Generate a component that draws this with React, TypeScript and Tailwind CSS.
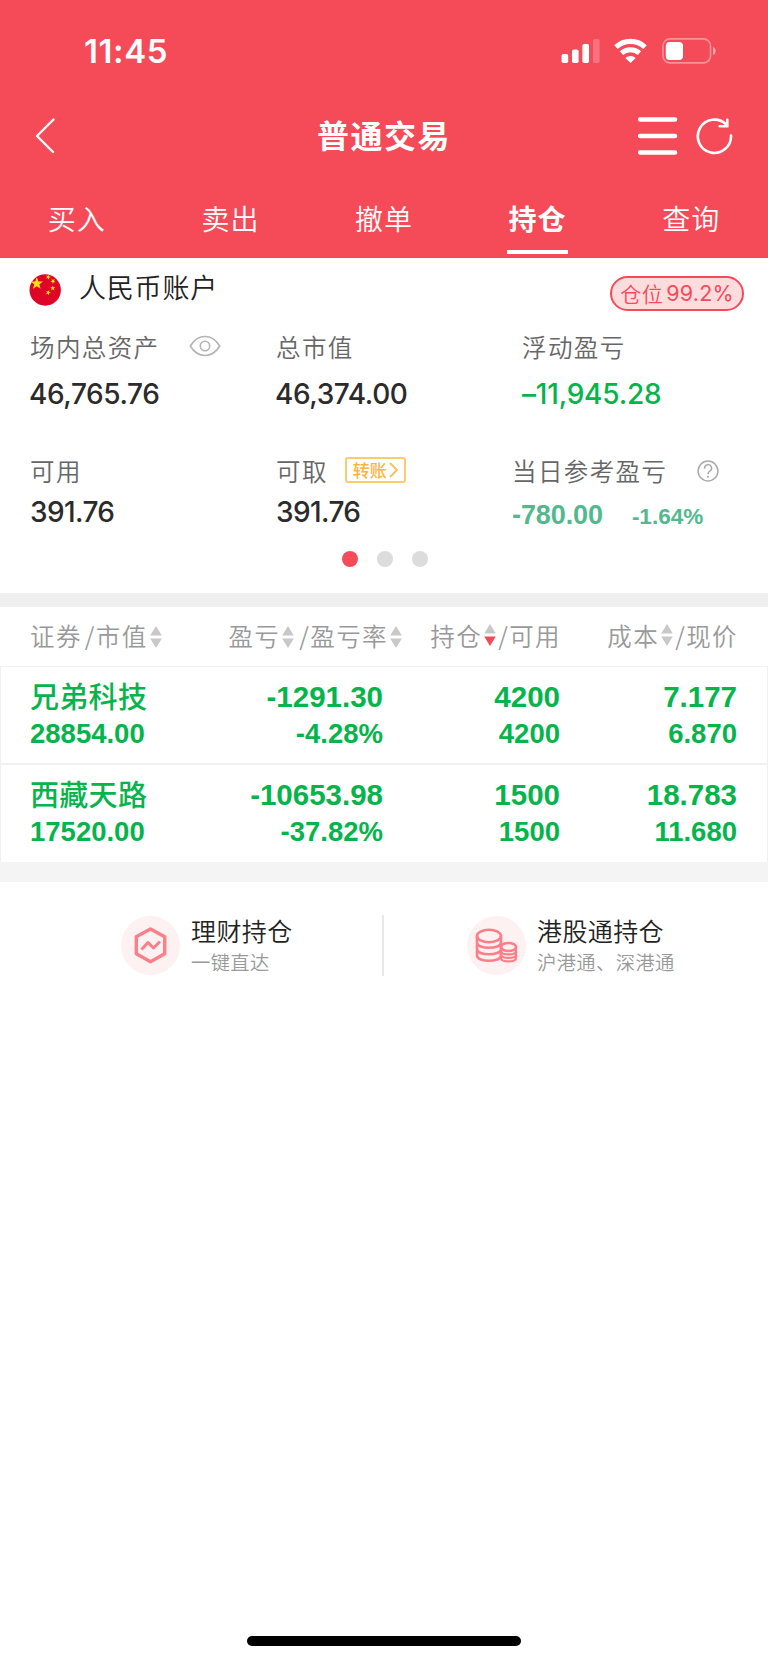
const tabs = ["买入", "卖出", "撤单", "持仓", "查询"];

const holdings = [
  {
    name: "兄弟科技",
    value: "28854.00",
    profit: "-1291.30",
    rate: "-4.28%",
    amount: "4200",
    usable: "4200",
    cost: "7.177",
    price: "6.870",
  },
  {
    name: "西藏天路",
    value: "17520.00",
    profit: "-10653.98",
    rate: "-37.82%",
    amount: "1500",
    usable: "1500",
    cost: "18.783",
    price: "11.680",
  },
];

const cjk = "font-['Noto_Sans_CJK_SC',sans-serif]";
const inter = "font-['Inter','Noto_Sans_CJK_SC',sans-serif]";
const helv = "font-['Liberation_Sans','Noto_Sans_CJK_SC',sans-serif]";

const label = "text-[24.5px] leading-9 tracking-[1.4px] font-[350] text-[#666]";
const amountText = `${inter} text-[28px] leading-9 font-[450] whitespace-nowrap`;

function Sort({ active = false }: { active?: boolean }) {
  return (
    <svg width="12" height="22" viewBox="0 0 12 22" className="shrink-0">
      <path d="M6 0L11.8 9.5H0.2Z" fill="#c8c8c8" />
      <path d="M6 22L11.8 12.5H0.2Z" fill={active ? "#f54b58" : "#c8c8c8"} />
    </svg>
  );
}

function StatusBar() {
  return (
    <div className="h-[103px] flex items-start justify-between pl-[84px] pr-[51px] pt-[38px] text-white">
      <span className={`${inter} text-[33px] leading-[26px] font-semibold tracking-[0.6px]`}>11:45</span>
      <div className="flex items-center">
        <svg width="39" height="26" viewBox="0 0 39 26" fill="#fff">
          <rect x="0.6" y="16" width="6.6" height="9" rx="1.8" />
          <rect x="11" y="11.5" width="6.6" height="13.5" rx="1.8" />
          <rect x="21.4" y="6" width="6.6" height="19" rx="1.8" />
          <rect x="32" y="1" width="6.6" height="24" rx="1.8" opacity="0.22" />
        </svg>
        <svg width="33" height="26" viewBox="0 0 33 26" className="ml-[14px]" fill="none" stroke="#fff">
          <path d="M2 9.2A21.2 21.2 0 0 1 31 9.2" strokeWidth="5.2" />
          <path d="M7.5 15.2A13.2 13.2 0 0 1 25.5 15.2" strokeWidth="5" />
          <path d="M16.5 25L11.3 20A7.5 7.5 0 0 1 21.7 20Z" fill="#fff" stroke="none" />
        </svg>
        <svg width="55" height="26" viewBox="0 0 55 26" className="ml-[15px]">
          <rect x="1" y="0.9" width="47.5" height="24" rx="7" fill="none" stroke="#fff" strokeOpacity="0.4" strokeWidth="1.6" />
          <rect x="3.8" y="4" width="17.2" height="18" rx="4" fill="#fff" />
          <path d="M51 9Q53.7 10 53.7 13T51 17Z" fill="#fff" opacity="0.5" />
        </svg>
      </div>
    </div>
  );
}

function TitleBar() {
  return (
    <div className="h-[66px] grid grid-cols-[1fr_auto_1fr] items-center">
      <svg width="20" height="36" viewBox="0 0 20 36" className="ml-[35px]" fill="none" stroke="#fff" strokeWidth="2.3" strokeLinecap="round" strokeLinejoin="round">
        <path d="M18.5 1.5L2 18L18 34" />
      </svg>
      <h1 className="text-[32px] leading-[63px] pb-[3px] tracking-[1.5px] font-bold text-white">普通交易</h1>
      <div className="flex justify-end items-center pr-[35px]">
        <svg width="40" height="38" viewBox="0 0 40 38" stroke="#fff" strokeWidth="4.6" strokeLinecap="round">
          <path d="M2.2 2.5H37M2.2 19H37M2.2 35.5H37" />
        </svg>
        <svg width="37" height="38" viewBox="0 0 37 38" className="ml-[18px]" fill="none" stroke="#fff" strokeWidth="2.6" strokeLinecap="round">
          <path d="M35 18.5A16.6 16.6 0 1 1 30.3 7.7" />
          <path d="M31.3 2.7V9.3H23.7" />
        </svg>
      </div>
    </div>
  );
}

function Tabs() {
  return (
    <div className="h-[89px] grid grid-cols-5 text-white">
      {tabs.map((t) => (
        <div key={t} className="flex flex-col items-center pt-[27px]">
          <span
            className={
              t === "持仓"
                ? "text-[28px] leading-[44px] tracking-[1px] font-bold"
                : "text-[28px] leading-[44px] tracking-[1px] font-[350]"
            }
          >
            {t}
          </span>
          {t === "持仓" && <div className="w-[61px] h-1 mt-[10px] bg-white" />}
        </div>
      ))}
    </div>
  );
}

const star = "M0 -6.5L1.6 -2.1L6.2 -2L2.6 0.8L3.8 5.3L0 2.7L-3.8 5.3L-2.6 0.8L-6.2 -2L-1.6 -2.1Z";

function Flag() {
  return (
    <svg width="32" height="32" viewBox="0 0 32 32">
      <circle cx="16.2" cy="16" r="15.7" fill="#de0526" />
      <g fill="#fbdd10">
        <path d={star} transform="translate(7.8 9.5)" />
        <path d={star} transform="translate(19.2 3) scale(.42) rotate(20)" />
        <path d={star} transform="translate(24 7.2) scale(.42) rotate(40)" />
        <path d={star} transform="translate(23.8 14.2) scale(.42)" />
        <path d={star} transform="translate(19.2 18.6) scale(.42) rotate(20)" />
      </g>
    </svg>
  );
}

function Account() {
  return (
    <section className="h-[335px]">
      <div className="h-[61px] flex items-start pl-[29px] pr-6">
        <div className="mt-4">
          <Flag />
        </div>
        <span className="ml-[18px] mt-[9px] text-[27px] leading-10 tracking-[0.8px] font-[350] text-[#222]">人民币账户</span>
        <div className="ml-auto mt-[18px] w-[134px] h-[35px] rounded-full border-2 border-[#f54b58] bg-[#fddcde] text-[#f54b58] flex items-center justify-center whitespace-nowrap">
          <span className="text-[21px] leading-[31px] tracking-[0.5px] font-[350]">仓位</span>
          <span className={`${inter} text-[21.5px] leading-[31px] tracking-[0.2px] ml-[3px]`}>99.2%</span>
        </div>
      </div>

      <div className="h-[123px] grid grid-cols-[246px_246px_1fr] pl-[30px] pt-2.5">
        <div>
          <div className="flex items-center h-9">
            <span className={label}>场内总资产</span>
            <svg width="32" height="22" viewBox="0 0 32 22" className="ml-[29px] -mt-[3px]" fill="none" stroke="#b4b4b4" strokeWidth="1.6">
              <path d="M1.3 11Q7 1.5 16 1.5T30.7 11Q25 20.5 16 20.5T1.3 11Z" />
              <circle cx="16" cy="11" r="4.7" />
            </svg>
          </div>
          <div className={`${amountText} -ml-px tracking-[-0.4px] mt-[11px] text-[#2b2b2b]`}>46,765.76</div>
        </div>
        <div>
          <div className={label}>总市值</div>
          <div className={`${amountText} -ml-px tracking-[-0.4px] mt-[11px] text-[#2b2b2b]`}>46,374.00</div>
        </div>
        <div>
          <div className={label}>浮动盈亏</div>
          <div className={`${amountText} tracking-[-0.2px] mt-[11px] text-[#05b44b]`}>–11,945.28</div>
        </div>
      </div>

      <div className="h-[109px] grid grid-cols-[246px_236px_1fr] pl-[30px] pt-[11px]">
        <div>
          <div className={label}>可用</div>
          <div className={`${amountText} tracking-[-0.6px] mt-[5px] text-[#2b2b2b]`}>391.76</div>
        </div>
        <div>
          <div className="flex items-center h-9">
            <span className={label}>可取</span>
            <div className="ml-[17px] -mt-[3px] w-[61px] h-[26px] flex items-center justify-center rounded-[3px] border-2 border-[#fbcb70] text-[#f8b53c]">
              <span className="text-[17px] leading-[22px] font-medium">转账</span>
              <svg width="9" height="16" viewBox="0 0 9 16" className="ml-0.5" fill="none" stroke="#fbc04f" strokeWidth="1.8">
                <path d="M1 1L8 8L1 15" />
              </svg>
            </div>
          </div>
          <div className={`${amountText} tracking-[-0.6px] mt-[5px] text-[#2b2b2b]`}>391.76</div>
        </div>
        <div>
          <div className="flex items-center h-9">
            <span className={label}>当日参考盈亏</span>
            <svg width="22" height="22" viewBox="0 0 22 22" className="ml-[30px]" fill="none" stroke="#aaa" strokeWidth="1.5">
              <circle cx="11" cy="11" r="9.9" />
              <path d="M7.6 8.6A3.5 3.5 0 1 1 12.8 11.2Q11 12.2 11 14.2" />
              <circle cx="11" cy="16.8" r="1" fill="#aaa" stroke="none" />
            </svg>
          </div>
          <div className={`${helv} flex items-baseline font-bold text-[#52b98f] mt-2 leading-9`}>
            <span className="text-[27px] tracking-[-0.1px]">-780.00</span>
            <span className="text-[22.5px] ml-[29px]">-1.64%</span>
          </div>
        </div>
      </div>

      <div className="flex justify-center gap-[19px] pl-[2px]">
        <i className="size-4 rounded-full bg-[#f54b58]" />
        <i className="size-4 rounded-full bg-[#dcdcdc]" />
        <i className="size-4 rounded-full bg-[#dcdcdc]" />
      </div>
    </section>
  );
}

const headCell = "flex items-center whitespace-nowrap";

function Holdings() {
  return (
    <section>
      <div className="h-[59px] pl-[30px] pr-[31px] pb-px grid grid-cols-[176px_177px_177px_177px] text-[24.5px] leading-9 tracking-[1.4px] font-[350] text-[#999]">
        <div className={headCell}>
          证券<span className="ml-[3px]">/</span>市值
          <span className="ml-0.5 mt-0.5"><Sort /></span>
        </div>
        <div className={`${headCell} -ml-10 -mr-[19px] justify-end`}>
          盈亏<span className="ml-0.5 mt-0.5"><Sort /></span>
          <span className="ml-[5px]">/</span>盈亏率
          <span className="ml-0.5 mt-0.5"><Sort /></span>
        </div>
        <div className={`${headCell} -mr-px justify-end`}>
          持仓<span className="ml-0.5 -mt-0.5"><Sort active /></span>
          <span className="ml-0.5">/</span>可用
        </div>
        <div className={`${headCell} -mr-px justify-end`}>
          成本<span className="ml-0.5 -mt-0.5"><Sort /></span>
          <span className="ml-0.5">/</span>现价
        </div>
      </div>

      <div className="border border-b-0 border-[#f1f1f1] text-[#05b44b] font-bold">
        {holdings.map((h, i) => (
          <div
            key={h.name}
            className={`${helv} ${i > 0 ? "border-t-2 border-[#f1f1f1] h-[99px]" : "h-24"} pl-[29px] pr-[30px] pt-3 grid grid-cols-[176px_177px_177px_177px] text-[29.5px] leading-9`}
          >
            <div>
              <div className={`${cjk} text-[29px] leading-[33px] mb-1 font-medium tracking-[0.3px]`}>{h.name}</div>
              <div className="text-[27.5px]">{h.value}</div>
            </div>
            <div className="text-right">
              <div>{h.profit}</div>
              <div className="mt-px text-[27.5px]">{h.rate}</div>
            </div>
            <div className="text-right">
              <div>{h.amount}</div>
              <div className="mt-px text-[27.5px]">{h.usable}</div>
            </div>
            <div className="text-right">
              <div>{h.cost}</div>
              <div className="mt-px text-[27.5px]">{h.price}</div>
            </div>
          </div>
        ))}
      </div>
      <div className="h-5 bg-[#f4f4f4]" />
    </section>
  );
}

function Links() {
  return (
    <section className="h-[126px] flex items-center">
      <div className="w-[382px] pl-[121px] flex items-center">
        <svg width="59" height="59" viewBox="0 0 59 59" fill="none" stroke="#fb7f89" strokeWidth="3.4" strokeLinejoin="round">
          <circle cx="29.5" cy="29.5" r="29.5" fill="#fef1f1" stroke="none" />
          <path d="M29.5 13L43.7 20.8V37.8L29.5 45.7L15.3 37.8V20.8Z" />
          <path d="M20.5 33.5L27 26.5L32.5 32L39 25.5" strokeWidth="3" />
        </svg>
        <div className="ml-[11px]">
          <div className="text-[25px] leading-8 tracking-[0.4px] font-[350] text-[#222]">理财持仓</div>
          <div className="mt-px text-[19.3px] leading-[30px] tracking-[0.4px] font-[350] text-[#999]">一键直达</div>
        </div>
      </div>
      <div className="w-0.5 h-[61px] bg-[#e8e8e8]" />
      <div className="pl-[83px] flex items-center">
        <svg width="59" height="59" viewBox="0 0 59 59" fill="none" stroke="#fb7f89" strokeWidth="2.6">
          <circle cx="29.5" cy="29.5" r="29.5" fill="#fef1f1" stroke="none" />
          <ellipse cx="22" cy="20" rx="12" ry="6.3" />
          <path d="M10 20V39.5C10 46.5 34 46.5 34 39.5V20M10 26.5C10 33.5 34 33.5 34 26.5M10 33C10 40 34 40 34 33" />
          <ellipse cx="41.5" cy="31" rx="7.5" ry="4" />
          <path d="M34 31V42C34 46.5 49 46.5 49 42V31M34 35C34 39.5 49 39.5 49 35M34 38.5C34 43 49 43 49 38.5" strokeWidth="2.2" />
        </svg>
        <div className="ml-[11px]">
          <div className="text-[25px] leading-8 tracking-[0.4px] font-[350] text-[#222]">港股通持仓</div>
          <div className="mt-px text-[19.3px] leading-[30px] tracking-[0.4px] font-[350] text-[#999]">沪港通、深港通</div>
        </div>
      </div>
    </section>
  );
}

export default function App() {
  return (
    <div lang="zh-CN" className={`${cjk} w-[768px] h-[1663px] bg-white flex flex-col overflow-hidden`}>
      <header className="bg-[#f54b58] h-[258px]">
        <StatusBar />
        <TitleBar />
        <Tabs />
      </header>
      <Account />
      <div className="h-3.5 bg-[#efefef]" />
      <Holdings />
      <Links />
      <div className="mt-auto mb-[17px] mx-auto w-[274px] h-2.5 rounded-full bg-black" />
    </div>
  );
}
